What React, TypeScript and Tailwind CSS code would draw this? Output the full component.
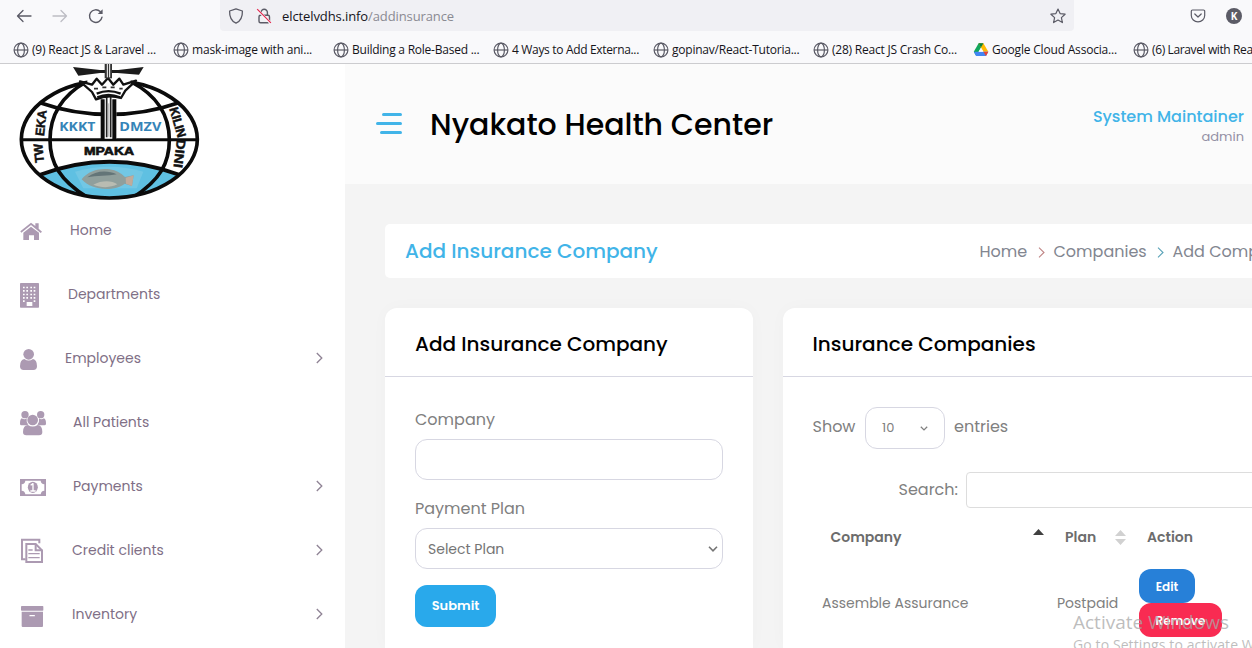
import type { ReactNode } from "react";

const bookmarks = [
  { label: "(9) React JS & Laravel ...", cls: "tracking-[-0.18px]" },
  { label: "mask-image with ani...", cls: "tracking-[-0.2px]" },
  { label: "Building a Role-Based ...", cls: "tracking-[-0.24px]" },
  { label: "4 Ways to Add Externa...", cls: "tracking-[-0.33px]" },
  { label: "gopinav/React-Tutoria...", cls: "tracking-[-0.22px]" },
  { label: "(28) React JS Crash Co...", cls: "tracking-[-0.22px]" },
  { label: "Google Cloud Associa...", cls: "tracking-[-0.19px]", drive: true },
  { label: "(6) Laravel with React ...", cls: "tracking-[-0.38px]" },
];

function Globe() {
  return (
    <svg className="size-4 shrink-0" viewBox="0 0 16 16" fill="none" stroke="#5b5b66" strokeWidth="1.2">
      <circle cx="8" cy="8" r="6.9" />
      <ellipse cx="8" cy="8" rx="3.4" ry="6.9" />
      <path d="M1 8h14" />
    </svg>
  );
}

function Drive() {
  return (
    <svg className="size-4 shrink-0" viewBox="0 0 16 16">
      <path d="M5.6 1.3h4.8L8 5.6 3.2 14 .8 9.8z" fill="#11a75c" />
      <path d="M5.6 1.3h4.8l4.9 8.5h-4.9z" fill="#ffba00" />
      <path d="M5.6 1.3 8 5.6l2.4-4.3z" fill="#0b8043" />
      <path d="M.8 9.8h14.5L13 14H3.2z" fill="#4285f4" />
      <path d="M10.4 9.8h4.9L13 14z" fill="#ea4335" />
      <path d="M8 5.9 10.3 9.8H5.7z" fill="#f9f9fb" />
    </svg>
  );
}

function BrowserBar() {
  return (
    <div className="flex h-16 flex-col border-b border-[#cccccf] bg-[#f9f9fb] font-['Open_Sans','Noto_Sans',sans-serif]">
      <div className="flex h-[31px] shrink-0 items-center">
        <div className="flex w-[220px] items-center gap-5 pl-4">
          <svg className="size-4" viewBox="0 0 16 16" fill="none" stroke="#5b5b66" strokeWidth="1.3" strokeLinecap="round" strokeLinejoin="round">
            <path d="M15 8H1.5M7 2.5 1.5 8 7 13.5" />
          </svg>
          <svg className="size-4" viewBox="0 0 16 16" fill="none" stroke="#bdbdc4" strokeWidth="1.3" strokeLinecap="round" strokeLinejoin="round">
            <path d="M1 8h13.5M9 2.5 14.5 8 9 13.5" />
          </svg>
          <svg className="size-4" viewBox="0 0 16 16" fill="none" stroke="#5b5b66" strokeWidth="1.4" strokeLinecap="round">
            <path d="M14 9.2A6.3 6.3 0 1 1 12.2 3.6" />
            <path d="M14.6 1.2v4.9H9.7z" fill="#5b5b66" stroke="none" />
          </svg>
        </div>
        <div className="flex h-[31px] w-[854px] items-center rounded-b bg-[#f0f0f4] px-2">
          <svg className="size-4" viewBox="0 0 16 16" fill="none" stroke="#5b5b66" strokeWidth="1.3" strokeLinejoin="round">
            <path d="M8 .8 14.4 3c.2 5.6-1.4 10-6.4 12.2C3 13 1.4 8.6 1.6 3z" />
          </svg>
          <svg className="ml-3 size-4" viewBox="0 0 16 16" fill="none" stroke="#5b5b66" strokeWidth="1.4">
            <rect x="3" y="7.3" width="10.5" height="7.5" rx="1.5" />
            <path d="M5 7V4.5a3.2 3.2 0 0 1 6.4 0V7" />
            <path d="M1.2 1.6 14.6 15" stroke="#f9f9fb" strokeWidth="2.6" />
            <path d="M1.2 1.2 14.9 14.9" stroke="#e22850" strokeWidth="1.2" />
          </svg>
          <span className="ml-2.5 text-[13px] leading-4 tracking-[-0.1px] text-[#15141a]">elctelvdhs.info<span className="text-[#8a8a92]">/addinsurance</span></span>
          <svg className="ml-auto size-4" viewBox="0 0 16 16" fill="none" stroke="#5b5b66" strokeWidth="1.2" strokeLinejoin="round">
            <path d="m8 1 2.1 4.6 5 .6-3.7 3.4 1 5L8 12.1 3.6 14.6l1-5L.9 6.2l5-.6z" />
          </svg>
        </div>
        <div className="flex items-center gap-5 pl-[116px]">
          <svg className="h-4 w-4" viewBox="0 0 16 16" fill="none" stroke="#5b5b66" strokeWidth="1.2" strokeLinecap="round" strokeLinejoin="round">
            <path d="M2.5 2h11a1.2 1.2 0 0 1 1.2 1.2v4.3a6.7 6.3 0 0 1-13.4 0V3.2A1.2 1.2 0 0 1 2.5 2z" />
            <path d="m4.8 6 3.2 3 3.2-3" />
          </svg>
          <span className="flex size-4 items-center justify-center rounded-full bg-[#5b5b66] text-[10px] font-bold leading-none text-white">K</span>
        </div>
      </div>
      <div className="flex min-w-0 flex-1 items-center overflow-hidden pl-[13px] pt-[5px]">
        {bookmarks.map((b) => (
          <div key={b.label} className="flex w-40 shrink-0 items-center gap-[3px] whitespace-nowrap text-[12px] leading-4 text-[#15141a]">
            {b.drive ? <Drive /> : <Globe />}
            <span className={b.cls}>{b.label}</span>
          </div>
        ))}
      </div>
    </div>
  );
}

function Logo() {
  return (
    <svg className="h-[136px] w-[220px] shrink-0 overflow-visible" viewBox="0 12 660 408" fontFamily="'Liberation Sans', Arial, sans-serif" fontWeight="bold">
      <defs>
        <clipPath id="globe"><ellipse cx="328" cy="238" rx="264" ry="176" /></clipPath>
        <filter id="soft"><feGaussianBlur stdDeviation="2.2" /></filter>
      </defs>
      <ellipse cx="328" cy="238" rx="264" ry="176" fill="#fff" />
      <g clipPath="url(#globe)" fill="none" stroke="#0b0b0b" strokeWidth="11">
        <path d="M120 345Q328 265 540 345L430 425H230z" fill="#5fc0e2" stroke="none" />
        <path d="M120 128Q220 163 328 163T536 128" />
        <path d="M60 239H596" strokeWidth="9" />
        <path d="M118 345Q328 265 540 345" strokeWidth="12" />
        <path d="M258 66C180 110 150 170 150 240S180 360 262 412" />
        <path d="M394 66C478 110 508 170 508 240S480 360 400 412" />
      </g>
      <ellipse cx="328" cy="238" rx="264" ry="176" fill="none" stroke="#0b0b0b" strokeWidth="11" />
      <path d="M262 46h130v26H262z" fill="#fff" />
      <path d="M303 118h46v118h-46z" fill="#fff" />
      <path d="M308 118v120M343 118v120" stroke="#0b0b0b" strokeWidth="12" />
      <path d="M320 108v124M332 108v124" stroke="#222" strokeWidth="5" />
      <path d="M326 130v100" stroke="#bbb" strokeWidth="3" />
      <path d="M240 64 276 74l14-18 16 18 18-20 16 20 18-18 12 18 38-12-32 30-13 22Q325 102 288 118l-12-22z" fill="#fff" stroke="#111" strokeWidth="7" strokeLinejoin="round" />
      <path d="M290 101Q325 86 362 101M292 112Q325 97 360 112" fill="none" stroke="#111" strokeWidth="7" />
      <path d="M282 86h12m13-4h12m13 0h12m14 4h10" stroke="#333" strokeWidth="5" />
      <path d="M219 21 300 30h55l76-9-14 23-65-5h-52l-65 8z" fill="#1c1c1c" />
      <path d="M314 12h22v43h-22z" fill="#333" />
      <path d="M322 12v40M329 12v40" stroke="#fff" strokeWidth="3" />
      <g filter="url(#soft)">
        <path d="M225 335Q328 305 430 335l-20 50H250z" fill="#7fcce6" opacity=".6" />
        <path d="M245 358c20-26 54-34 84-30 20 3 34 12 46 23l26-5-5 32-22-7c-27 22-98 24-129-13z" fill="#909f9c" />
        <path d="M262 352c25-20 60-22 88-9-24 6-62 3-88 9z" fill="#647478" />
        <path d="M280 374c23 10 52 10 72-1-18-13-49-11-72 1z" fill="#b9bcb2" />
        <path d="m377 353 24-7-5 32-18-7z" fill="#c0ab9c" />
      </g>
      <g fontSize="35">
        <text x="178" y="214" fill="#3584b8" textLength="108" lengthAdjust="spacingAndGlyphs" fontFamily="'Open Sans', sans-serif">KKKT</text>
        <text x="358" y="214" fill="#3584b8" textLength="126" lengthAdjust="spacingAndGlyphs" fontFamily="'Open Sans', sans-serif">DMZV</text>
        <text x="252" y="286" fill="#111" stroke="#111" strokeWidth="2" textLength="150" lengthAdjust="spacingAndGlyphs">MPAKA</text>
      </g>
      <g fontSize="38" fill="#111" stroke="#111" strokeWidth="1.5">
        <text transform="translate(132 229) rotate(-84)" textLength="78" lengthAdjust="spacingAndGlyphs">EKA</text>
        <text transform="translate(132 307) rotate(-95)" textLength="57" lengthAdjust="spacingAndGlyphs">TW</text>
        <text transform="translate(508 146) rotate(74)" textLength="92" lengthAdjust="spacingAndGlyphs">KILIN</text>
        <text transform="translate(531 236) rotate(97)" textLength="86" lengthAdjust="spacingAndGlyphs">DINI</text>
      </g>
    </svg>
  );
}

const menu: { label: string; cls: string; box: string; arrow?: boolean; icon: ReactNode }[] = [
  {
    label: "Home", cls: "ml-6", box: "60 36 78 78",
    icon: (
      <>
        <path d="m61 79 32-26 13 10v-8h10v16l10 9-4 4-29-24-29 23z" />
        <path d="M70 83 93 65l24 18v22h-15V91H87v14H70z" />
      </>
    ),
  },
  {
    label: "Departments", cls: "ml-[22px]", box: "60 228 78 78",
    icon: (
      <>
        <path d="M60 236q0-2 2-2h53q2 0 2 2v70q0 2-2 2H62q-2 0-2-2z" />
        <path fill="#fff" d="M69 245h5v5h-5zm10 0h5v5h-5zm12 0h5v5h-5zm10 0h5v5h-5zM69 255h5v5h-5zm10 0h5v5h-5zm12 0h5v5h-5zm10 0h5v5h-5zM69 266h5v5h-5zm10 0h5v5h-5zm12 0h5v5h-5zm10 0h5v5h-5zM69 276h5v5h-5zm10 0h5v5h-5zm12 0h5v5h-5zm10 0h5v5h-5zM69 286h5v5h-5zm32 0h5v5h-5zM80 291h17v12H80z" />
      </>
    ),
  },
  {
    label: "Employees", cls: "ml-[19px]", box: "60 420 78 78", arrow: true,
    icon: (
      <>
        <circle cx="86" cy="448" r="16" />
        <path d="M73 462q13 9 26 0 12 2 12 22 0 11-11 11H71q-11 0-11-11 0-20 13-22z" />
      </>
    ),
  },
  {
    label: "All Patients", cls: "ml-[27px]", box: "60 612 78 78",
    icon: (
      <>
        <circle cx="75" cy="629" r="11" />
        <circle cx="122" cy="629" r="11" />
        <path d="M65 640q9 6 15 0-2 11 5 19-6 0-9 2H64q-4 0-4-5 0-13 5-16zM132 640q-9 6-15 0 2 11-5 19 6 0 9 2h12q5 0 5-5 0-13-6-16z" />
        <circle cx="98" cy="645" r="16" />
        <path d="M84 660q14 9 29 0 14 1 14 21 0 10-10 10H79q-10 0-10-10 0-20 15-21z" />
      </>
    ),
  },
  {
    label: "Payments", cls: "ml-[27px]", box: "60 129 78 78", arrow: true,
    icon: (
      <>
        <path fillRule="evenodd" d="M60 147h78v51H60zM76 152q-1 10-11 11v19q10 1 11 11h46q1-10 11-11v-19q-10-1-11-11z" />
        <ellipse cx="98.5" cy="172" rx="15" ry="17" />
        <path d="M92 165q5-1 7-5v23m-8 0h16" fill="none" stroke="#fff" strokeWidth="4" />
      </>
    ),
  },
  {
    label: "Credit clients", cls: "ml-[26px]", box: "60 321 78 78", arrow: true,
    icon: (
      <g fill="none" stroke="#ac9ab2" strokeWidth="6">
        <path d="M77 388H66v-59h52v11" />
        <path d="M79 342h28l19 19v35H79z" />
        <path d="M107 342v19h20" />
        <path d="M85 360h13M85 371h34M85 383h34" strokeWidth="4" />
      </g>
    ),
  },
  {
    label: "Inventory", cls: "ml-[26px]", box: "60 513 78 78", arrow: true,
    icon: (
      <>
        <rect x="63" y="528" width="67" height="14" rx="2" />
        <path d="M65 545h64v43q0 3-3 3H68q-3 0-3-3z" />
        <rect x="88" y="555" width="17" height="4" rx="2" fill="#fff" />
      </>
    ),
  },
];

function Sidebar() {
  return (
    <aside className="flex w-[345px] shrink-0 flex-col overflow-hidden bg-white">
      <div className="flex h-[134px] shrink-0"><Logo /></div>
      {menu.map((m) => (
        <div key={m.label} className="flex h-16 shrink-0 items-center pl-5 text-[14px] text-[#806f86]">
          <svg className="size-[26px] shrink-0 overflow-visible" viewBox={m.box} fill="#ac9ab2">{m.icon}</svg>
          <span className={m.cls}>{m.label}</span>
          {m.arrow && (
            <svg className="ml-auto mr-[21px] h-3 w-2" viewBox="0 0 8 12" fill="none" stroke="#8f8395" strokeWidth="1.3">
              <path d="m.8 1 5 5-5 5" />
            </svg>
          )}
        </div>
      ))}
    </aside>
  );
}

function Crumb({ color }: { color: string }) {
  return (
    <svg className="mt-[2px] h-[11px] w-[7px] shrink-0" viewBox="0 0 7 11" fill="none" stroke={color} strokeWidth="1.1">
      <path d="m1 .7 5 4.8-5 4.8" />
    </svg>
  );
}

function Caret({ className }: { className: string }) {
  return (
    <svg className={className} viewBox="0 0 10 6" fill="none" stroke="currentColor" strokeWidth="1.6">
      <path d="m1 .8 4 4 4-4" />
    </svg>
  );
}

export default function App() {
  return (
    <div className="relative flex h-[648px] w-[1252px] flex-col overflow-hidden bg-[#f4f4f4] font-['Poppins','Inter',sans-serif]">
      <BrowserBar />
      <div className="flex min-h-0 flex-1">
        <Sidebar />
        <main className="flex w-[907px] flex-col overflow-hidden">
          <header className="flex h-[120px] shrink-0 items-center bg-[#fbfbfb] pl-[31px] pr-2">
            <div className="flex w-[26px] flex-col items-end gap-1.5 pb-0.5">
              <span className="h-[3px] w-5 rounded-full bg-[#41b4e8]" />
              <span className="h-[3px] w-[26px] rounded-full bg-[#41b4e8]" />
              <span className="h-[3px] w-[22px] rounded-full bg-[#41b4e8]" />
            </div>
            <h1 className="ml-7 pt-px text-[30px] font-medium leading-10 text-black">Nyakato Health Center</h1>
            <div className="ml-auto flex flex-col items-end pt-1">
              <span className="text-base font-medium leading-[22px] text-[#41b4e8]">System Maintainer</span>
              <span className="text-[13px] leading-[18px] text-[#9490a5]">admin</span>
            </div>
          </header>
          <div className="flex flex-1 flex-col pl-10 pt-10">
            <div className="flex h-[54px] w-[900px] shrink-0 items-center rounded-[5px] bg-white pl-5">
              <h2 className="w-[574px] shrink-0 text-[20px] font-medium text-[#41b4e8]">Add Insurance Company</h2>
              <div className="flex shrink-0 items-center whitespace-nowrap pl-[0.5px] pt-px text-base text-[#828690]">
                <span className="w-[58px] shrink-0">Home</span>
                <Crumb color="#c08686" />
                <span className="ml-[9px] w-[103px] shrink-0">Companies</span>
                <Crumb color="#5ba3b8" />
                <span className="ml-[9px]">Add Company</span>
              </div>
            </div>
            <div className="mt-[30px] flex flex-1 gap-[30px]">
              <section className="flex w-[368px] shrink-0 flex-col rounded-t-[12px] bg-white shadow-[0_0_18px_rgba(0,0,0,0.025)]">
                <div className="flex h-[69px] shrink-0 items-center border-b border-[#d7d7e2] pl-[30px] pt-1">
                  <h3 className="text-[20px] font-medium text-black">Add Insurance Company</h3>
                </div>
                <div className="flex flex-col items-start px-[30px] pt-[31px]">
                  <label className="mb-[7px] text-base text-[#808080]">Company</label>
                  <div className="h-[41px] w-full rounded-[12px] border border-[#d7d7e2] bg-white" />
                  <label className="mb-[7px] mt-[17px] text-base text-[#808080]">Payment Plan</label>
                  <div className="flex h-[41px] w-full items-center justify-between rounded-[12px] border border-[#d7d7e2] bg-white pl-3 pr-1 text-[14px] text-[#757575]">
                    <span className="pt-[2px]">Select Plan</span>
                    <Caret className="h-[6px] w-[10px]" />
                  </div>
                  <button className="mt-4 h-[42px] w-[81px] rounded-[12px] bg-[#29a9eb] text-[13px] font-semibold text-white">Submit</button>
                </div>
              </section>
              <section className="flex w-[500px] shrink-0 flex-col rounded-tl-[12px] bg-white text-[#808080] shadow-[0_0_18px_rgba(0,0,0,0.025)]">
                <div className="flex h-[69px] shrink-0 items-center border-b border-[#d7d7e2] pl-[29.5px] pt-1">
                  <h3 className="text-[20px] font-medium text-black">Insurance Companies</h3>
                </div>
                <div className="mt-[30px] flex h-[42px] items-center pl-[29px] text-base">
                  <span className="w-[53px] pb-[3px] pl-[0.5px]">Show</span>
                  <div className="flex h-[42px] w-20 items-center justify-between rounded-[12px] border border-[#d7d7e2] pl-4 pr-4 text-[13px]">
                    10
                    <Caret className="h-[5px] w-[8px]" />
                  </div>
                  <span className="ml-[9px] pb-[3px]">entries</span>
                </div>
                <div className="mt-[23px] flex h-9 items-center pl-[115px] text-base">
                  <span className="w-[68px] shrink-0 pl-[0.5px]">Search:</span>
                  <div className="h-9 flex-1 rounded-[4px] border border-[#dddddd]" />
                </div>
                <div className="mt-[14px] flex h-[30px] items-center pl-[47px] text-[14px] font-semibold text-[#6c6c6c]">
                  <span className="w-[203px] pl-[0.5px]">Company</span>
                  <svg className="mb-[10px] h-[6px] w-[11px]" viewBox="0 0 11 6" fill="#404040"><path d="M0 6 5.5 0 11 6z" /></svg>
                  <span className="ml-[21px] w-[50px]">Plan</span>
                  <svg className="h-[15px] w-[11px]" viewBox="0 0 11 15" fill="#d1d1d1"><path d="M0 6 5.5 0 11 6zM0 9h11l-5.5 6z" /></svg>
                  <span className="ml-[21px]">Action</span>
                </div>
                <div className="mt-[17px] flex h-[68px] items-center pl-[39px] text-[14px]">
                  <span className="w-[235px]">Assemble Assurance</span>
                  <span className="w-[82px]">Postpaid</span>
                  <div className="flex flex-col items-start text-[12px] font-semibold text-white">
                    <button className="h-[34px] w-14 rounded-[12px] bg-[#2780d8] pt-px">Edit</button>
                    <button className="h-[34px] w-[83px] rounded-[12px] bg-[#f92b52] pt-px">Remove</button>
                  </div>
                </div>
              </section>
            </div>
          </div>
        </main>
      </div>
      <div className="pointer-events-none absolute left-[1073px] top-[610px] flex flex-col whitespace-nowrap font-['Open_Sans',sans-serif] text-[#a8a8a8]/75">
        <span className="text-[19px] leading-6">Activate Windows</span>
        <span className="text-[14px] leading-[22px] tracking-[0.1px]">Go to Settings to activate Windows.</span>
      </div>
    </div>
  );
}
